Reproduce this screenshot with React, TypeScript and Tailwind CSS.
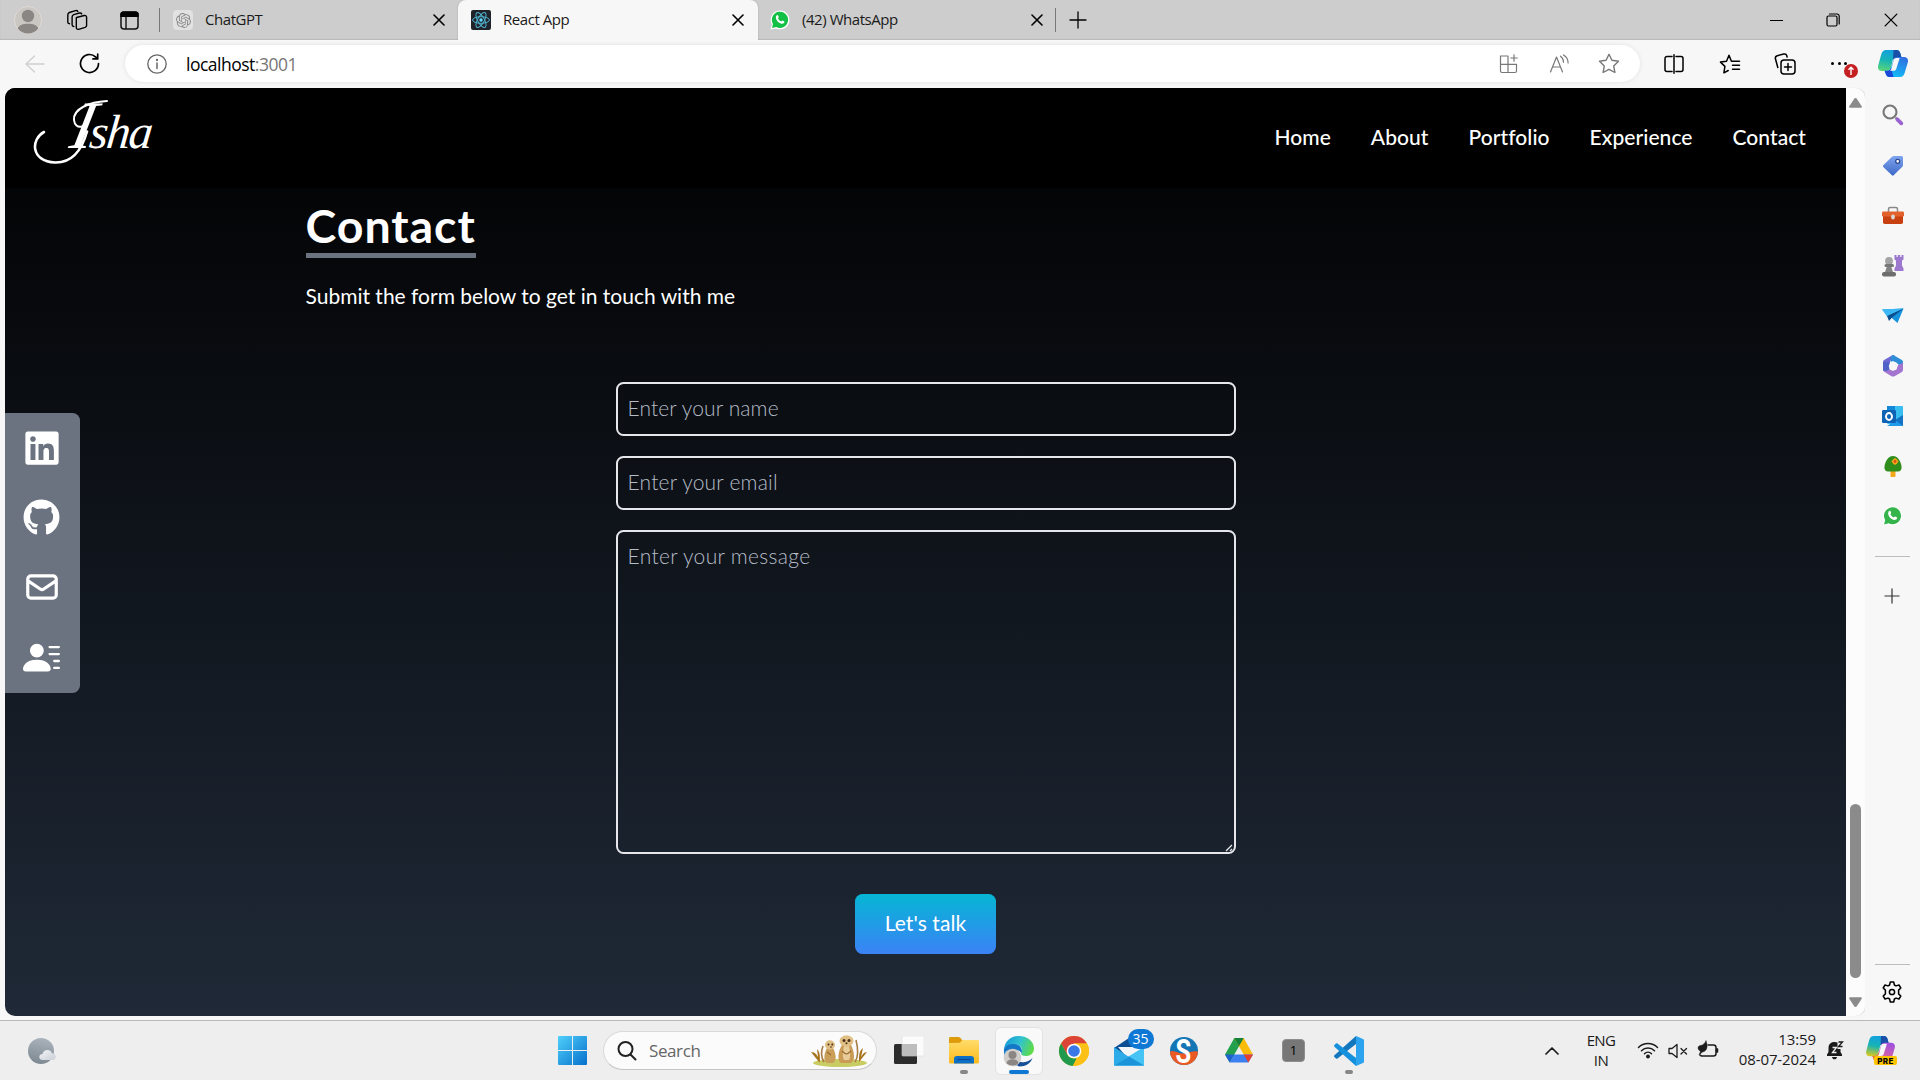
import React from 'react';
import { FaLinkedin, FaGithub } from 'react-icons/fa';
import { HiOutlineMail } from 'react-icons/hi';
import { BsFillPersonLinesFill } from 'react-icons/bs';
import { SiOpenai } from 'react-icons/si';

const ink = { fill: 'none', stroke: 'currentColor', strokeLinecap: 'round', strokeLinejoin: 'round' } as const;

function CloseIcon({ size = 12, width = 1.6 }: { size?: number; width?: number }) {
  return (
    <svg width={size} height={size} viewBox="0 0 12 12" {...ink} strokeWidth={width} className="shrink-0">
      <path d="M1 1l10 10M11 1L1 11" />
    </svg>
  );
}

function ReactBadge() {
  return (
    <svg width="20" height="20" viewBox="0 0 20 20" className="shrink-0">
      <rect width="20" height="20" rx="2" fill="#20232a" />
      <g fill="none" stroke="#4fb3cf" strokeWidth="1">
        <ellipse cx="10" cy="10" rx="8.4" ry="3.3" />
        <ellipse cx="10" cy="10" rx="8.4" ry="3.3" transform="rotate(60 10 10)" />
        <ellipse cx="10" cy="10" rx="8.4" ry="3.3" transform="rotate(120 10 10)" />
      </g>
      <circle cx="10" cy="10" r="1.7" fill="#61dafb" />
    </svg>
  );
}

function WhatsAppIcon({ size, color }: { size: number; color: string }) {
  return (
    <svg width={size} height={size} viewBox="0 0 20 20" className="shrink-0">
      <path d="M.4 19.6l1.5-5A9.4 9.4 0 1 1 6 18.4z" fill="#fff" />
      <path d="M2 18l1-4.100A8.100 8.100 0 1 1 6.300 17z" fill={color} />
      <path d="M6.900 5.200c.5-.3 1-.2 1.200.3l.6 1.500c.2.500-.6 1-.6 1.400 0 .7 2.200 2.900 3 2.900.5 0 .9-1 1.400-.8l1.500.7c.6.3.5.9.2 1.500-.6 1-2 1.300-3.300.9C8.400 12.700 6.500 10.600 6 8.500c-.3-1.400 0-2.700.9-3.300z" fill="#fff" />
    </svg>
  );
}

function CopilotIcon({ width, height, pink }: { width: number; height: number; pink?: boolean }) {
  const id = pink ? 'cp' : 'cb';
  return (
    <svg width={width} height={height} viewBox="0 0 30 27" className="shrink-0">
      <defs>
        <linearGradient id={id + '1'} x1="0.5" y1="0" x2="0.3" y2="1">
          <stop offset="0" stopColor="#12a0e0" />
          <stop offset="0.5" stopColor="#18b4b4" />
          <stop offset="1" stopColor={pink ? '#d8c81e' : '#5bd67a'} />
        </linearGradient>
        <linearGradient id={id + '2'} x1="0.7" y1="0" x2="0.3" y2="1">
          <stop offset="0" stopColor={pink ? '#a050e0' : '#2f6fe0'} />
          <stop offset="1" stopColor={pink ? '#f06a8c' : '#12c0f8'} />
        </linearGradient>
      </defs>
      <path d="M8 0h10.500c2.300 0 3.300 1.500 4 3.700L23.600 8H18c-2 0-3 1-3.500 3l-1.600 6.500C12.300 20 11 21 8.500 21H4c-3 0-4.600-2-3.800-5.500l3-11C4.100 1.500 5.500 0 8 0z" fill={`url(#${id}1)`} />
      <path d="M15.500 0h3c2.300 0 3.300 1.500 4 3.700L23.600 8H18c-1.500 0-2.500.6-3 1.700z" fill="#1a4fa8" />
      <path d="M22 27H11.500c-2.300 0-3.300-1.500-4-3.700L6.600 20.800H9c2.500 0 3.500-1.300 4-3.300L15.500 10c.6-2 1.700-3 3.500-3h7c3 0 4.600 2 3.800 5.500l-3 10C25.900 25.500 24.500 27 22 27z" fill={`url(#${id}2)`} />
      <path d="M15.500 27h-4c-2.300 0-3.300-1.500-4-3.700l-.9-2.500H9c2.500 0 3.500-1.300 4-3.300z" fill={pink ? '#e8772e' : '#1b49d8'} />
      <path d="M18.500 8h3.200l-3.300 10.500c-.5 1.700-1.300 2.300-3 2.300h-3.600c1.200-.7 1.500-1.700 1.900-3L15.400 11c.5-1.800 1.200-3 3.100-3z" fill="#f7f7f7" />
    </svg>
  );
}

function Tab({ icon, label }: { icon: React.ReactNode; label: string }) {
  return (
    <>
      {icon}
      <span className="mb-0.5 ml-3 flex-1 whitespace-nowrap text-[15px] leading-5 tracking-[-0.450px] text-[#1a1a1a]">{label}</span>
      <CloseIcon />
    </>
  );
}

function TabBar() {
  return (
    <div className="flex h-10 shrink-0 items-center bg-[#cdcdcd] shadow-[inset_0_-1px_1px_#b8b8b8]">
      <svg width="28" height="28" viewBox="0 0 28 28" className="ml-[14px]">
        <circle cx="14" cy="14" r="13.500" fill="#cac7c3" stroke="#dedad5" />
        <circle cx="14" cy="10" r="6.200" fill="#8a8683" />
        <path d="M3.800 22.500C5 19 9 17.700 14 17.700s9 1.300 10.200 4.800C21.700 25.800 18 27.500 14 27.500S6.300 25.800 3.800 22.500z" fill="#8a8683" />
      </svg>
      <svg width="22" height="22" viewBox="0 0 22 22" {...ink} strokeWidth="1.400" className="ml-[24px]">
        <path d="M10.600 8.500l7.600-2c1.300-.3 2.400.5 2.400 1.800v8.200c0 1-.6 1.600-1.500 1.900l-6.500 1.900c-1.300.3-2.300-.4-2.300-1.700V10c0-.8-.3-1.200.3-1.500z" />
        <path d="M7.800 17.500c-1 0-1.700-.7-1.700-1.700V8c0-1.200.5-2 1.600-2.400L13.500 4c1-.2 1.800 0 2.200.9" />
        <path d="M3.500 14.800c-1 0-1.700-.7-1.700-1.700V5.900c0-1.200.5-2 1.600-2.400L9.500 1.600c1-.2 1.900 0 2.300.9" />
      </svg>
      <svg width="19" height="19" viewBox="0 0 19 19" className="ml-8">
        <rect x="1" y="1" width="17" height="17" rx="3" fill="none" stroke="#111" strokeWidth="1.500" />
        <path d="M.3 6V3.500A3 3 0 0 1 3.300.4h12.400a3 3 0 0 1 3 3.100V6z" />
        <path d="M6 6v12" stroke="#111" strokeWidth="1.400" />
      </svg>
      <div className="ml-[20px] h-6 w-px bg-[#777]" />
      <div className="ml-[13px] flex w-[272px] items-center">
        <Tab
          icon={<span className="flex size-5 shrink-0 items-center justify-center rounded-sm bg-[#e2e2e2] text-[#8b8b8b]"><SiOpenai size={15} /></span>}
          label="ChatGPT"
        />
      </div>
      <div className="ml-[13px] flex h-10 w-[300px] items-center rounded-t-lg bg-[#f7f7f7] pl-[13px] pr-[14px] shadow-[0_0_2px_#aaa]">
        <Tab icon={<ReactBadge />} label="React App" />
      </div>
      <div className="ml-3 flex w-[273px] items-center">
        <Tab icon={<WhatsAppIcon size={20} color="#12c045" />} label="(42) WhatsApp" />
      </div>
      <div className="ml-3 h-6 w-px bg-[#777]" />
      <svg width="18" height="18" viewBox="0 0 18 18" {...ink} strokeWidth="1.300" className="ml-[13px]">
        <path d="M9 1v16M1 9h16" />
      </svg>
      <div className="ml-auto flex items-center pr-[22px]">
        <div className="h-px w-[13px] bg-black" />
        <svg width="14" height="14" viewBox="0 0 14 14" {...ink} strokeWidth="1.200" className="ml-[43px]">
          <rect x="1" y="3" width="10" height="10" rx="1.500" />
          <path d="M3.500 1h7.500a2.200 2.200 0 0 1 2.200 2.200V11" />
        </svg>
        <span className="ml-11 flex"><CloseIcon size={14} width={1.1} /></span>
      </div>
    </div>
  );
}

function Toolbar() {
  return (
    <div className="flex h-12 shrink-0 items-center bg-[#f7f7f7] pb-px pl-[25px] text-[#222]">
      <svg width="20" height="18" viewBox="0 0 20 18" {...ink} strokeWidth="1.300" className="text-[#cfcfcf]">
        <path d="M19 9H1M9.500 1L1 9l8.500 8" />
      </svg>
      <svg width="21" height="21" viewBox="0 0 21 21" {...ink} strokeWidth="1.700" className="ml-[34px] text-black">
        <path d="M19.500 10.500a9 9 0 1 1-3-6.700l2 1.900M18.700 1.200v4.700H14" />
      </svg>
      <div className="ml-[25px] flex h-[37px] w-[1515px] items-center rounded-full bg-white pl-[22px] pr-5 shadow-[0_0_4px_#e0e0e0]">
        <svg width="20" height="20" viewBox="0 0 20 20" {...ink} strokeWidth="1.300" className="text-[#666]">
          <circle cx="10" cy="10" r="9.200" />
          <path d="M10 9v5.500" strokeWidth="1.500" />
          <circle cx="10" cy="6" r=".5" />
        </svg>
        <span className="ml-[19px] flex-1 text-[17.500px] leading-6 tracking-[-0.500px] text-black">
          localhost<span className="text-[#767676]">:3001</span>
        </span>
        <svg width="20" height="20" viewBox="0 0 20 20" {...ink} strokeWidth="1.200" className="text-[#777]">
          <path d="M1.500 2h7.500v16.500H3A1.500 1.500 0 0 1 1.500 17zM1.500 10.300h16v6.700A1.500 1.500 0 0 1 16 18.500H9M15 .8v6.400M11.800 4h6.400" />
        </svg>
        <svg width="21" height="20" viewBox="0 0 21 20" {...ink} strokeWidth="1.200" className="ml-[30px] text-[#777]">
          <path d="M1.500 18L7.500 3l6 15M3.500 13h8M11.500 2.200c2 1.300 3 3.500 3 6M14.500 1c3 1.700 4.600 4.500 4.600 8" />
        </svg>
        <svg width="22" height="21" viewBox="0 0 22 21" {...ink} strokeWidth="1.400" className="ml-[28px] text-[#777]">
          <path d="M11 1.300l2.900 6 6.600 1-4.800 4.600 1.200 6.600-5.900-3.200-5.900 3.200 1.200-6.600L1.500 8.300l6.600-1z" />
        </svg>
      </div>
      <svg width="20" height="20" viewBox="0 0 20 20" {...ink} strokeWidth="1.500" className="ml-6 text-black">
        <path d="M8 2.500H3A2 2 0 0 0 1 4.500v11a2 2 0 0 0 2 2h5M12 2.500h5a2 2 0 0 1 2 2v11a2 2 0 0 1-2 2h-5M10 .8v18.400" />
      </svg>
      <svg width="22" height="20" viewBox="0 0 22 20" {...ink} strokeWidth="1.500" className="ml-[35px] text-black">
        <path d="M13 7.200h-.6L10 1.300 7.500 7.200l-6 .9 4.400 4.300-1 6.400 4.300-2.300M13 7.200h7.500M13.500 11.200h7M13.500 15.200h7" />
      </svg>
      <svg width="22" height="22" viewBox="0 0 22 22" {...ink} strokeWidth="1.500" className="ml-[33px] text-black">
        <rect x="7" y="7" width="14" height="14" rx="3" />
        <path d="M14 10.500v7M10.500 14h7M3.800 14.500L1.500 6C1 4.300 1.700 3.200 3.200 2.700l6.500-1.600c1.500-.4 2.700.3 3.100 1.700l.3 1.200" />
      </svg>
      <div className="relative ml-[35px] flex w-4 justify-between">
        <i className="size-[3px] rounded-full bg-black" />
        <i className="size-[3px] rounded-full bg-black" />
        <i className="size-[3px] rounded-full bg-black" />
        <svg width="14" height="14" viewBox="0 0 14 14" className="absolute left-[13px] top-[2px]">
          <circle cx="7" cy="7" r="7" fill="#c42021" />
          <path d="M7 11V3.500M4.500 5.800L7 3.300l2.500 2.500" stroke="#fff" strokeWidth="1.400" fill="none" />
        </svg>
      </div>
      <span className="ml-[31px]"><CopilotIcon width={30} height={27} /></span>
    </div>
  );
}

const navLinks = ['Home', 'About', 'Portfolio', 'Experience', 'Contact'];

function Signature() {
  return (
    <div className="relative -mt-5 flex w-[120px] items-baseline pl-10 font-['Liberation_Serif',serif] italic leading-[76px]">
      <svg width="120" height="78" viewBox="0 0 120 78" {...ink} strokeWidth="2.600" className="absolute left-0 top-[2px]">
        <path d="M11 43C-2 50-3 72 22 73.500c18 .5 27-13 32-31" />
        <path d="M74 12C56 13 40 20 41 31c1 10 13 9 14-3" strokeWidth="2" />
      </svg>
      <span className="-skew-x-12 text-[68px]">I</span>
      <span className="-ml-1.5 -skew-x-6 text-[48px] tracking-[-1.700px]">sha</span>
    </div>
  );
}

function Page() {
  return (
    <div className="relative flex w-[1841px] flex-col overflow-hidden rounded-l-[10px] bg-[linear-gradient(to_bottom,#000000,#1f2937)] font-[Lato,sans-serif] text-white">
      <nav className="flex h-[100px] shrink-0 items-center justify-between bg-black pl-7 pr-10">
        <Signature />
        <ul className="mb-0.5 flex gap-10 text-[21px] font-medium tracking-[0.060px]">
          {navLinks.map((l) => (
            <li key={l}>{l}</li>
          ))}
        </ul>
      </nav>
      <main className="mx-auto flex w-[1280px] flex-col items-start px-5">
        <h2 className="mt-[11px] h-[59px] border-b-[5px] border-[#6b7280] text-[46.500px] font-bold leading-[53px] tracking-[0.950px]">Contact</h2>
        <p className="mt-[23px] text-[21px] leading-[30px]">Submit the form below to get in touch with me</p>
        <form className="mt-[71px] flex w-[620px] flex-col self-center">
          <div className="flex h-[54px] items-center rounded-[7.500px] border-2 border-[#e5e7eb] px-2.5 pb-0.5 text-[21px] font-light tracking-[0.130px] text-[#b6bcc7]">Enter your name</div>
          <div className="mt-5 flex h-[54px] items-center rounded-[7.500px] border-2 border-[#e5e7eb] px-2.5 pb-0.5 text-[21px] font-light tracking-[0.200px] text-[#b6bcc7]">Enter your email</div>
          <div className="relative mt-5 h-[324px] rounded-[7.500px] border-2 border-[#e5e7eb] px-2.5 pt-[9px] text-[21px] font-light leading-[30px] tracking-[0.330px] text-[#b6bcc7]">
            Enter your message
            <svg width="10" height="10" viewBox="0 0 10 10" className="absolute bottom-0 right-0">
              <path d="M2 9l6-6M6 9l2-2" stroke="#e5e7eb" strokeWidth="1.300" />
            </svg>
          </div>
          <button className="mt-10 h-[60px] w-[141px] self-center rounded-[7.500px] bg-[linear-gradient(to_bottom,#06b6d4,#3b82f6)] pb-0.5 text-[21px] font-normal tracking-[0.100px] text-white">Let's talk</button>
        </form>
      </main>
      <div className="absolute left-0 top-[325px] flex h-[280px] w-[75px] flex-col rounded-r-[7.500px] bg-[#6b7280] pb-px pr-[2px]">
        <span className="flex flex-1 items-center justify-center"><FaLinkedin size={38} /></span>
        <span className="flex flex-1 items-center justify-center"><FaGithub size={37} /></span>
        <span className="flex flex-1 items-center justify-center"><HiOutlineMail size={38} /></span>
        <span className="flex flex-1 items-center justify-center"><BsFillPersonLinesFill size={37} /></span>
      </div>
    </div>
  );
}

function Scrollbar() {
  return (
    <div className="flex w-[19px] flex-col items-center rounded-r-[10px] bg-[#fcfcfc] shadow-[1px_0_1px_#ddd]">
      <svg width="13" height="10" viewBox="0 0 13 10" className="mt-[10px] shrink-0" fill="#8b8b8b"><path d="M6.500 0c.6 0 1 .3 1.300.8l4.900 7.500c.5.800 0 1.400-.8 1.400H1.100C.3 9.700-.2 9.100.3 8.300L5.200.8C5.500.3 5.900 0 6.500 0z" /></svg>
      <div className="mt-auto h-[174px] w-[11px] shrink-0 rounded-full bg-[#8b8b8b]" />
      <svg width="13" height="10" viewBox="0 0 13 10" className="mb-[9px] mt-[19px] shrink-0 rotate-180" fill="#8b8b8b"><path d="M6.500 0c.6 0 1 .3 1.300.8l4.900 7.500c.5.800 0 1.400-.8 1.400H1.100C.3 9.700-.2 9.100.3 8.300L5.200.8C5.500.3 5.900 0 6.500 0z" /></svg>
    </div>
  );
}

function SideIcon({ children }: { children: React.ReactNode }) {
  return (
    <div className="flex h-[50px] shrink-0 items-center justify-center">
      <svg width="22" height="22" viewBox="0 0 22 22">{children}</svg>
    </div>
  );
}

function Sidebar() {
  return (
    <div className="flex w-[55px] flex-col bg-[#f7f7f7] pt-[2px]">
      <SideIcon>
        <path d="M13.500 13.500l2.700 2.700" stroke="#8a8a8a" strokeWidth="2" />
        <path d="M15.300 15.300l4 4" stroke="#9b63d0" strokeWidth="3.800" strokeLinecap="round" />
        <circle cx="8" cy="8" r="6.500" fill="none" stroke="#777" strokeWidth="2.100" />
      </SideIcon>
      <div className="h-px shrink-0" />
      <SideIcon>
        <defs><linearGradient id="tag" x1="0" y1="0" x2="0" y2="1"><stop stopColor="#7fa5ee" /><stop offset="1" stopColor="#3d68c8" /></linearGradient></defs>
        <path d="M12 1h7.500A1.500 1.500 0 0 1 21 2.500V10c0 .7-.2 1.200-.7 1.700l-8.400 8.400c-.7.700-1.500.7-2.200 0L1.500 12.200c-.7-.7-.6-1.500 0-2.200L10 1.800C10.600 1.200 11.200 1 12 1z" fill="url(#tag)" />
        <circle cx="15.700" cy="6.300" r="2" fill="#fff" stroke="#2b4890" strokeWidth="1.300" />
      </SideIcon>
      <SideIcon>
        <path d="M6.500 7V4.200C6.500 3 7 2.500 8.200 2.500h5.600c1.200 0 1.700.5 1.700 1.700V7" fill="none" stroke="#888" strokeWidth="1.500" />
        <rect x="1" y="8" width="20" height="11" rx="1.800" fill="#c8400f" />
        <rect x="0" y="6.500" width="22" height="5" rx="1.300" fill="#e2622d" />
        <rect x="9.200" y="9.500" width="3.600" height="5" rx="1.800" fill="#d9d9d9" />
      </SideIcon>
      <SideIcon>
        <path d="M12.500 0h2v2h1.300V0h2.400v2h1.300V0h2v4.500l-1.500 1v5l1.500 3V16h-9v-2.500l1.500-3v-5l-1.500-1z" fill="#9c78cf" />
        <path d="M4.800 12h4.500l1.700 5H3z" fill="#838383" />
        <circle cx="7" cy="6" r="3.900" fill="#a4a4a4" />
        <rect x="2.500" y="9" width="9.500" height="3" rx="1.500" fill="#777" />
        <rect x="0" y="17" width="14" height="4.500" rx="2" fill="#6d6d6d" />
      </SideIcon>
      <SideIcon>
        <path d="M0 4.500L21.500 3.500 15.500 18z" fill="#1691dc" />
        <path d="M0 4.500L21.500 3.500 5 11.500z" fill="#3cb9f5" />
        <path d="M5 11L21.500 3.500 10 12.500 7 16z" fill="#0b4f8f" />
      </SideIcon>
      <SideIcon>
        <path d="M1 7.500C1 6 1.500 5.300 2.500 4.700L9.500.7c1-.5 2-.5 3 0L8 6.500v8.200L1 16z" fill="#6e68d2" />
        <path d="M9 1l2-.7c1 0 1.300.2 2 .6l6.500 3.800C20.500 5.300 21 6 21 7.500V13l-7-5.500-5.500-1z" fill="#2f8dd8" />
        <path d="M21 8v6.500c0 1.300-.5 2-1.500 2.700l-7 4c-1 .5-2 .5-3 0l-6.500-4c-1-.6-2-1.400-2-2.500 3 .7 6 .8 8.500-.4L14 15l2-5z" fill="#a374d0" />
        <path d="M1 7v8c1.700 1.300 4 1.300 6 0V7z" fill="#4e62c8" />
        <path d="M8 7.700L11 6l3.500 1.700L15.500 11l-1 3.300L11 16l-3.500-1.700L6.800 11z" fill="#f7f7f7" />
      </SideIcon>
      <SideIcon>
        <rect x="5" y="1" width="16" height="18" rx="1" fill="#38bdf0" />
        <path d="M5 1h8v6H5z" fill="#1488d8" />
        <path d="M21 10.500V20a1 1 0 0 1-1 1H5l9-6z" fill="#1f9bea" />
        <path d="M21 21l-8-6 8-5z" fill="#1373c2" />
        <rect x="0" y="5" width="14" height="13" rx="1.200" fill="#0f63b5" />
        <ellipse cx="7" cy="11.500" rx="3" ry="3.500" fill="none" stroke="#fff" strokeWidth="1.900" />
      </SideIcon>
      <SideIcon>
        <rect x="8.500" y="14" width="5" height="8" rx="1" fill="#f3a71b" />
        <path d="M11 1c4 0 6 3 7.500 6.500C20 11 20.500 16.500 16 16.500H6C1.500 16.500 2 11 3.500 7.500 5 4 7 1 11 1z" fill="#2f8d1c" />
        <path d="M13 3l2 1.500 1.500 2L15 8.500 13 10l-2-1.500-1.500-2 1.500-2z" fill="#f8a81c" />
        <circle cx="13" cy="6.500" r="1.400" fill="#d94f12" />
      </SideIcon>
      <SideIcon><svg width="21" height="22" viewBox="0 0 20 20"><WhatsAppIcon size={20} color="#35b44b" /></svg></SideIcon>
      <div className="ml-[10px] mt-[15px] h-px w-[35px] shrink-0 bg-[#bcbcbc]" />
      <svg width="16" height="16" viewBox="0 0 16 16" stroke="#333" strokeWidth="1.200" className="ml-[19px] mt-[31px] shrink-0"><path d="M8 .5v15M.5 8h15" /></svg>
      <div className="ml-[10px] mt-auto h-px w-[35px] shrink-0 bg-[#bcbcbc]" />
      <svg width="22" height="22" viewBox="0 0 22 22" {...ink} strokeWidth="1.500" className="mb-[17px] ml-4 mt-[16px] shrink-0 text-black">
        <path d="M9.300 1h3.400l.7 3 1.600.9 3-.9 1.800 3-2.200 2.100v3.800l2.200 2.100-1.800 3-3-.9-1.600.9-.7 3H9.300l-.7-3-1.600-.9-3 .9-1.800-3 2.200-2.100V9.100L2.200 7 4 4l3 .9L8.600 4z" />
        <circle cx="11" cy="11" r="2.600" />
      </svg>
    </div>
  );
}

function Slot({ children, dot }: { children: React.ReactNode; dot?: boolean }) {
  return (
    <div className="relative flex h-[59px] w-[55px] shrink-0 items-center justify-center">
      {children}
      {dot && <i className="absolute bottom-[6px] left-[23.500px] h-1 w-2 rounded-full bg-[#868686]" />}
    </div>
  );
}

function Meerkats() {
  return (
    <svg width="62" height="32" viewBox="0 0 62 32">
      <ellipse cx="31" cy="28" rx="27" ry="4" fill="#c8cc62" />
      <path d="M10 27L2 17c4 0 6 3 7 5l-1-8c3 3 3 7 3 13zM50 27l8-10c-3 0-5 3-6 5l2-9c-4 3-4 7-4 14z" fill="#a8751f" />
      <path d="M15 27c-3-5-3-11-1-16M46 27c4-6 3-14 1-22" fill="none" stroke="#a77d45" strokeWidth="1.600" />
      <path d="M18 13c-3 5-4 13 0 15h6c4-2 3-10 0-15z" fill="#c99f5a" />
      <ellipse cx="21" cy="10" rx="5" ry="4.700" fill="#e0bf85" />
      <path d="M33 10c-4 6-5 16-1 18h10c5-3 3-12 0-18z" fill="#c99b56" />
      <path d="M35 11h5c1 5 2 10 0 14h-5c-2-4-1-9 0-14z" fill="#e8cd9a" />
      <ellipse cx="37.500" cy="6" rx="7" ry="5.800" fill="#e0bf85" />
      <g fill="#4a2f1b"><circle cx="35" cy="5.500" r="1.500" /><circle cx="40" cy="5.500" r="1.500" /><circle cx="37.500" cy="8.300" r="1" /><circle cx="19.500" cy="9.500" r="1" /><circle cx="23.300" cy="9.500" r="1" /><circle cx="22" cy="12" r=".8" /></g>
      <path d="M33 16c2 2 3 3 5 3M42 16c-2 2-3 3-5 3M18 17l4 3" stroke="#9a6c32" strokeWidth="1.200" fill="none" />
    </svg>
  );
}

function Taskbar() {
  return (
    <div className="flex h-[60px] shrink-0 items-center border-t border-[#b9b9b9] bg-[#eeeeee]">
      <svg width="30" height="28" viewBox="0 0 30 28" className="ml-[27px]">
        <defs>
          <linearGradient id="moon" x1=".6" y1="0" x2=".4" y2="1"><stop stopColor="#aab3bb" /><stop offset="1" stopColor="#7d8892" /></linearGradient>
          <linearGradient id="cloud" x1="0" y1="0" x2="1" y2="1"><stop stopColor="#f4f5f7" /><stop offset="1" stopColor="#c9ced6" /></linearGradient>
        </defs>
        <circle cx="14" cy="14" r="13" fill="url(#moon)" />
        <path d="M16 23c-2.300 0-3.700-1.300-3.700-3.100 0-1.700 1.400-3 3.200-3 .7-2.500 2.500-4 4.900-4 2.500 0 4.200 1.500 4.800 3.600 2.300 0 3.600 1.400 3.600 3.200 0 2-1.500 3.300-3.600 3.300z" fill="url(#cloud)" />
      </svg>
      <svg width="29" height="29" viewBox="0 0 29 29" className="ml-[501px]">
        <defs><linearGradient id="win" x1="0" y1="0" x2="1" y2="1"><stop stopColor="#4fd0fb" /><stop offset="1" stopColor="#0670cc" /></linearGradient></defs>
        <path d="M1 0h13v14H0V1a1 1 0 0 1 1-1zM15 0h13a1 1 0 0 1 1 1v13H15zM0 15h14v14H1a1 1 0 0 1-1-1zM15 15h14v13a1 1 0 0 1-1 1H15z" fill="url(#win)" />
      </svg>
      <div className="ml-4 flex h-[39px] w-[274px] items-center rounded-full border border-[#d9d9d9] border-b-[#c4c4c4] bg-[#fbfbfb] pl-[13px]">
        <svg width="20" height="20" viewBox="0 0 20 20" {...ink} strokeWidth="2" className="text-[#222]"><circle cx="8.500" cy="8" r="7" /><path d="M13.500 13.500l5 5" /></svg>
        <span className="ml-3 flex-1 text-[17px] leading-6 tracking-[-0.400px] text-[#666]">Search</span>
        <span className="mr-[5px]"><Meerkats /></span>
      </div>
      <div className="ml-[4px] flex items-center">
        <Slot>
          <svg width="30" height="29" viewBox="0 0 30 29"><rect x="0" y="8" width="23" height="20" rx="1.500" fill="#2c2c2c" /><rect x="8" y="0" width="22" height="20" rx="1" fill="#fff" fillOpacity=".75" stroke="#ddd" strokeWidth=".6" /><path d="M8 8h15v12H8z" fill="#bdbdbd" /></svg>
        </Slot>
        <Slot dot>
          <svg width="30" height="27" viewBox="0 0 30 27"><defs><linearGradient id="fold" x1="0" y1="0" x2="0" y2="1"><stop stopColor="#ffdc6a" /><stop offset="1" stopColor="#fdbb1c" /></linearGradient></defs><path d="M0 1.500C0 .6.600 0 1.500 0h8c.8 0 1.200.2 1.700.7L14 4v6H0z" fill="#dd9b0c" /><path d="M0 6l11-.3L13.500 3H28.500c.9 0 1.500.6 1.500 1.500V25a1.500 1.500 0 0 1-1.500 1.500h-27A1.500 1.500 0 0 1 0 25z" fill="url(#fold)" /><path d="M5 26.500V22a3 3 0 0 1 3-3h14a3 3 0 0 1 3 3v4.500z" fill="#0d6fc6" /><path d="M8.500 22.500h13" stroke="#0a4c92" strokeWidth="1.200" /></svg>
        </Slot>
        <Slot>
          <div className="relative flex size-12 items-center justify-center rounded-md border border-[#e2e2e2] bg-[#f9f9f9]">
            <svg width="32" height="32" viewBox="0 0 32 32">
              <defs><linearGradient id="edge" x1="0" y1=".3" x2="1" y2=".6"><stop stopColor="#159bd8" /><stop offset=".5" stopColor="#32c3cf" /><stop offset="1" stopColor="#61dc42" /></linearGradient></defs>
              <path d="M1 14C2 6 8 1 16 1c9 0 15 6 15 12.500 0 5-4 7.500-8 7.500-3.500 0-5.500-1-4.500-2.700C20 15 19 10 12 9.500 7 9 3 11 1 14z" fill="url(#edge)" />
              <path d="M1 14c2-4 6-5.200 10-5 7 .5 9 6 7.500 9.300-1-2-3-3.300-5-3-4 .6-5 6-2 10l4 5C7 31.500 0 24 1 14z" fill="#1378c8" />
              <path d="M12 20c0 6 5 8 10 7 3-.5 5.500-2 7.500-4C28 28 22.500 31.500 16.500 31.500 12 30 10 24 12 20z" fill="#174f96" />
              <circle cx="9.500" cy="22.500" r="8.800" fill="#d0cecb" /><circle cx="9.500" cy="20" r="4" fill="#8a8683" /><path d="M3.500 28.300c.5-3 3-4 6-4s5.500 1 6 4a9 9 0 0 1-12 0z" fill="#8a8683" />
            </svg>
            <i className="absolute bottom-0 h-1 w-5 rounded-full bg-[#0f78d4]" />
          </div>
        </Slot>
        <Slot>
          <svg width="30" height="30" viewBox="0 0 30 30">
            <circle cx="15" cy="15" r="15" fill="#fbc116" />
            <path d="M2 7.500A15 15 0 0 1 28 7.500H15L8.500 18.700z" fill="#dc4437" />
            <path d="M2 7.500L8.500 18.700C10 21.200 12.300 22.400 15 22.400h2.500L13.600 30A15 15 0 0 1 2 7.500z" fill="#1f9a4c" />
            <path d="M21.500 18.700L15 30A15 15 0 0 0 28 7.500H15z" fill="#fbc116" />
            <circle cx="15" cy="15" r="7.300" fill="#fff" /><circle cx="15" cy="15" r="5.800" fill="#3b78e7" />
          </svg>
        </Slot>
        <Slot>
          <svg width="30" height="30" viewBox="0 0 30 30"><path d="M0 12L15 2l15 10v8H0z" fill="#0c4e93" /><path d="M4 11h22v8l-11 5z" fill="#f1f5f8" /><path d="M0 11l15 10L30 11v18.500H0z" fill="#2cabe8" /><path d="M0 29.500L30 11v18.500z" fill="#45c3f5" /><path d="M0 29.500L15 20.500l15 9z" fill="#1b94da" /></svg>
          <span className="absolute left-[26.500px] top-[8px] flex h-5 w-[26px] items-center justify-center rounded-full bg-[#0f78d4] text-[14px] leading-none text-white">35</span>
        </Slot>
        <Slot>
          <span className="relative flex size-7 items-center justify-center overflow-hidden rounded-full bg-[#1576b5]">
            <svg width="28" height="28" viewBox="0 0 28 28" className="absolute inset-0"><path d="M0 14.500c4-2 8 2 13 2s10-3 15-2V28H0z" fill="#ec5a24" /></svg>
            <span className="relative font-[Roboto,sans-serif] text-[34px] font-bold leading-none text-white scale-x-75">S</span>
          </span>
        </Slot>
        <Slot>
          <svg width="28" height="25" viewBox="0 0 28 25"><path d="M9.300 0h9.400L14 8.300 4.700 24.500 0 16.500z" fill="#24a04f" /><path d="M9.300 0h9.400L28 16.500h-9.300z" fill="#fbbc08" /><path d="M9.300 0h9.400L14 8.300z" fill="#158038" /><path d="M4.700 24.500l4.600-8H28l-4.700 8z" fill="#3c7ff0" /><path d="M18.700 16.500H28l-4.700 8z" fill="#e5402f" /><path d="M0 16.500h9.300l-4.600 8z" fill="#1c62d0" /></svg>
        </Slot>
        <Slot>
          <span className="flex size-[23px] items-center justify-center rounded-sm border border-[#8d8d8d] bg-[#777] text-[13px] text-black">1</span>
        </Slot>
        <Slot dot>
          <svg width="30" height="30" viewBox="0 0 30 30"><path d="M22 0l7 3c.7.300 1 .8 1 1.500v21c0 .7-.3 1.200-1 1.500l-7 3z" fill="#2ba3ee" /><path d="M22 0v8L3.500 22.500c-.5.300-1 .3-1.500 0L.4 21c-.5-.5-.5-1.200 0-1.700z" fill="#1277bd" /><path d="M22 30v-8L3.500 7.500c-.5-.3-1-.3-1.500 0L.4 9c-.5.500-.5 1.200 0 1.700z" fill="#1590dc" /></svg>
        </Slot>
      </div>
      <div className="ml-auto flex items-center pr-[24px] text-[#1b1b1b]">
        <svg width="14" height="8" viewBox="0 0 14 8" {...ink} strokeWidth="1.700"><path d="M1 7l6-6 6 6" /></svg>
        <div className="mb-0.5 ml-[27px] flex w-[30px] flex-col items-center whitespace-nowrap text-[15px] leading-5 tracking-[-0.600px]"><span>ENG</span><span>IN</span></div>
        <svg width="22" height="18" viewBox="0 0 22 18" {...ink} strokeWidth="1.500" className="mb-0.5 ml-[21px]"><path d="M1.500 6.500a13.500 13.500 0 0 1 19 0M4.500 9.700a9.200 9.200 0 0 1 13 0M7.500 12.700a5 5 0 0 1 7 0" /><circle cx="11" cy="15.500" r="1.200" fill="currentColor" /></svg>
        <svg width="20" height="16" viewBox="0 0 20 16" {...ink} strokeWidth="1.300" className="ml-[9px]"><path d="M1 5.500h3L9 1.500v13l-5-4H1zM13 5.500l5.500 5.500M18.500 5.500L13 11" /></svg>
        <svg width="22" height="18" viewBox="0 0 22 18" {...ink} strokeWidth="1.500" className="mb-1 ml-[9px]"><path d="M11 5h5.500A2.500 2.500 0 0 1 19 7.500v6a2.500 2.500 0 0 1-2.500 2.500H5a2.500 2.500 0 0 1-2-1" /><path d="M19.500 9h1v3h-1z" fill="currentColor" /><path d="M9 1c2 5 1.500 10-3.500 11L2 15l1.500-3.500C0 9 .5 6 3.500 5.500 6.500 5 7.500 3.500 9 1z" fill="currentColor" strokeWidth=".5" /></svg>
        <div className="mb-[3px] ml-[18px] flex w-[79px] flex-col items-end whitespace-nowrap text-[15px] leading-5 tracking-[-0.100px]"><span>13:59</span><span>08-07-2024</span></div>
        <svg width="18" height="19" viewBox="0 0 18 19" className="ml-[10px]"><path d="M8.500 1C4.500 1 2.500 3.500 2.500 7v4L1 13.500V15h15v-1.500L14.500 11V8h-3V1.600C10.500 1.200 9.500 1 8.500 1zM6 16h5c-.3 1.500-1.200 2.300-2.500 2.300S6.300 17.500 6 16z" fill="#1b1b1b" /><path d="M12.500 1h4l-4 4.500h4" stroke="#1b1b1b" strokeWidth="1.300" fill="none" /><path d="M6.500 6.500h4l-4 5h4" stroke="#eee" strokeWidth="1.300" fill="none" /></svg>
        <div className="relative ml-[22px] flex h-[29px] w-[30px]">
          <CopilotIcon width={29} height={26} pink />
          <span className="absolute -right-[1px] bottom-0 flex h-[9px] w-[23px] items-center justify-center rounded-[2px] bg-[#ffc400] font-[Inter,sans-serif] text-[8px] font-extrabold leading-none tracking-[0.300px] text-black">PRE</span>
        </div>
      </div>
    </div>
  );
}

export default function App() {
  return (
    <div className="flex h-[1080px] w-[1920px] flex-col overflow-hidden bg-[#f7f7f7] font-['Open_Sans',sans-serif]">
      <TabBar />
      <Toolbar />
      <div className="flex h-[932px] shrink-0">
        <div className="mb-[4px] flex pl-[5px]">
          <Page />
          <Scrollbar />
        </div>
        <Sidebar />
      </div>
      <Taskbar />
    </div>
  );
}
